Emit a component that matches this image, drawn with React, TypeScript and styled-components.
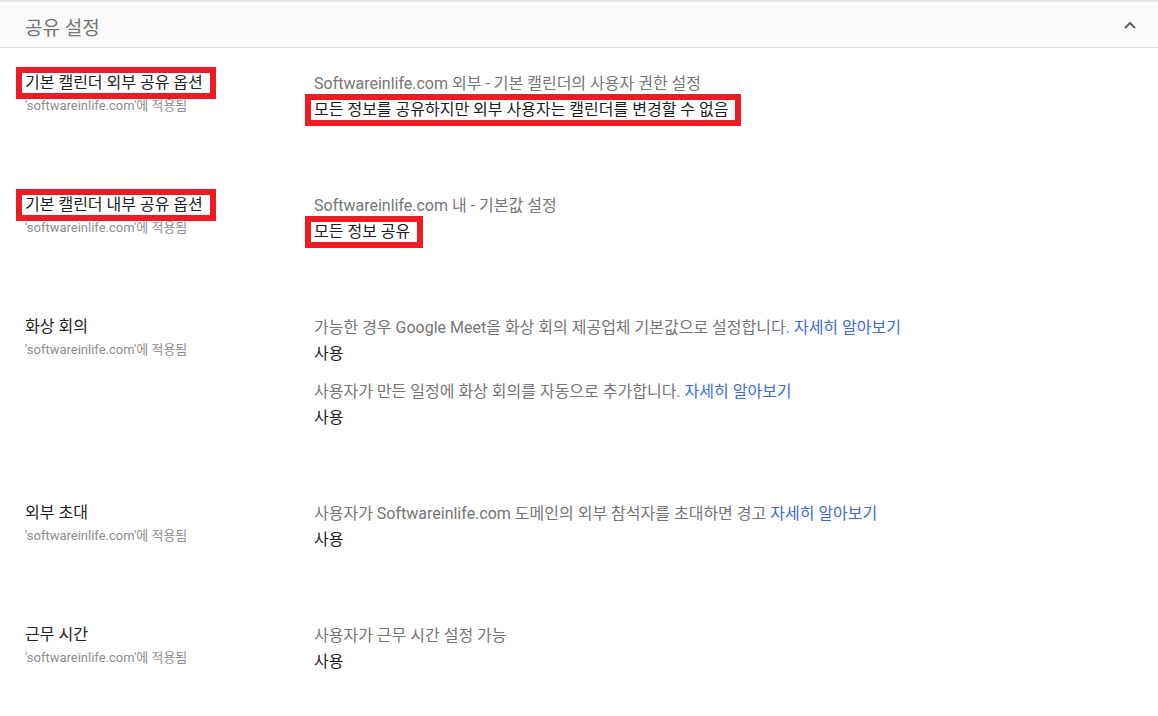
import React from 'react';
import styled, { createGlobalStyle } from 'styled-components';

const GlobalStyle = createGlobalStyle`
  html, body {
    margin: 0;
    padding: 0;
    background: #ffffff;
  }
  body {
    font-family: Roboto, "Noto Sans CJK KR", "Noto Sans", sans-serif;
    -webkit-font-smoothing: antialiased;
  }
`;

type Block = {
  desc: string;
  link?: string;
  value: string;
  marked?: boolean;
};

type Setting = {
  label: string;
  marked?: boolean;
  blocks: Block[];
};

const settings: Setting[] = [
  {
    label: '기본 캘린더 외부 공유 옵션',
    marked: true,
    blocks: [
      {
        desc: 'Softwareinlife.com 외부 - 기본 캘린더의 사용자 권한 설정',
        value: '모든 정보를 공유하지만 외부 사용자는 캘린더를 변경할 수 없음',
        marked: true,
      },
    ],
  },
  {
    label: '기본 캘린더 내부 공유 옵션',
    marked: true,
    blocks: [
      {
        desc: 'Softwareinlife.com 내 - 기본값 설정',
        value: '모든 정보 공유',
        marked: true,
      },
    ],
  },
  {
    label: '화상 회의',
    blocks: [
      {
        desc: '가능한 경우 Google Meet을 화상 회의 제공업체 기본값으로 설정합니다.',
        link: '자세히 알아보기',
        value: '사용',
      },
      {
        desc: '사용자가 만든 일정에 화상 회의를 자동으로 추가합니다.',
        link: '자세히 알아보기',
        value: '사용',
      },
    ],
  },
  {
    label: '외부 초대',
    blocks: [
      {
        desc: '사용자가 Softwareinlife.com 도메인의 외부 참석자를 초대하면 경고',
        link: '자세히 알아보기',
        value: '사용',
      },
    ],
  },
  {
    label: '근무 시간',
    blocks: [
      {
        desc: '사용자가 근무 시간 설정 가능',
        value: '사용',
      },
    ],
  },
];

const Panel = styled.section`
  border-top: 2px solid #e4e4e4;
`;

const Header = styled.header`
  box-sizing: border-box;
  display: flex;
  align-items: center;
  justify-content: space-between;
  height: 46px;
  padding: 9px 22px 0 25px;
  background: #fafafa;
  border-bottom: 1px solid #e0e0e0;
`;

const Title = styled.h2`
  margin: 0;
  font-size: 19px;
  font-weight: 400;
  line-height: 24px;
  color: #757575;
`;

const Collapse = styled.button`
  display: flex;
  align-items: center;
  justify-content: center;
  margin-top: -9px;
  padding: 0;
  border: 0;
  background: none;
  width: 12px;
  height: 12px;
`;

const Row = styled.div`
  display: grid;
  grid-template-columns: 289px 1fr;
  padding: 25px 0 50px 25px;
`;

const LabelCol = styled.div`
  display: flex;
  flex-direction: column;
`;

const Label = styled.div`
  font-size: 16px;
  line-height: 20px;
  color: #212121;
`;

const Scope = styled.div`
  margin-top: 5px;
  font-size: 13px;
  line-height: 16px;
  color: #8d8d8d;
`;

const ValueCol = styled.div`
  display: flex;
  flex-direction: column;
  gap: 18px;
  margin-top: 1px;
`;

const Entry = styled.div`
  display: flex;
  flex-direction: column;
  gap: 6px;
`;

const Desc = styled.div`
  font-size: 16px;
  line-height: 20px;
  color: #757575;
  white-space: nowrap;
`;

const Link = styled.a`
  color: #3b6bd9;
  text-decoration: none;
  cursor: pointer;
`;

const Value = styled.div`
  font-size: 16px;
  line-height: 20px;
  color: #1b1b1b;
  white-space: nowrap;
`;

// red annotation frame drawn around a piece of text, without moving it
const Mark = styled.span`
  display: inline-block;
  padding: 0 7px 0 3px;
  margin: -6px -13px -6px -9px;
  border: 6px solid #ed1c24;
  background: #ffffff;
`;

const Chevron = () => (
  <svg width="12" height="8" viewBox="0 0 12 8" fill="none">
    <polyline points="1,7 6,2 11,7" stroke="#616161" strokeWidth="2" />
  </svg>
);

const Marked: React.FC<{ on?: boolean; children: React.ReactNode }> = ({ on, children }) =>
  on ? <Mark>{children}</Mark> : <>{children}</>;

export default function App() {
  return (
    <>
      <GlobalStyle />
      <Panel>
        <Header>
          <Title>공유 설정</Title>
          <Collapse aria-label="접기">
            <Chevron />
          </Collapse>
        </Header>
        {settings.map((s) => (
          <Row key={s.label}>
            <LabelCol>
              <Label>
                <Marked on={s.marked}>{s.label}</Marked>
              </Label>
              <Scope>'softwareinlife.com'에 적용됨</Scope>
            </LabelCol>
            <ValueCol>
              {s.blocks.map((b, i) => (
                <Entry key={i}>
                  <Desc>
                    {b.desc}
                    {b.link && (
                      <>
                        {' '}
                        <Link>{b.link}</Link>
                      </>
                    )}
                  </Desc>
                  <Value>
                    <Marked on={b.marked}>{b.value}</Marked>
                  </Value>
                </Entry>
              ))}
            </ValueCol>
          </Row>
        ))}
      </Panel>
    </>
  );
}
